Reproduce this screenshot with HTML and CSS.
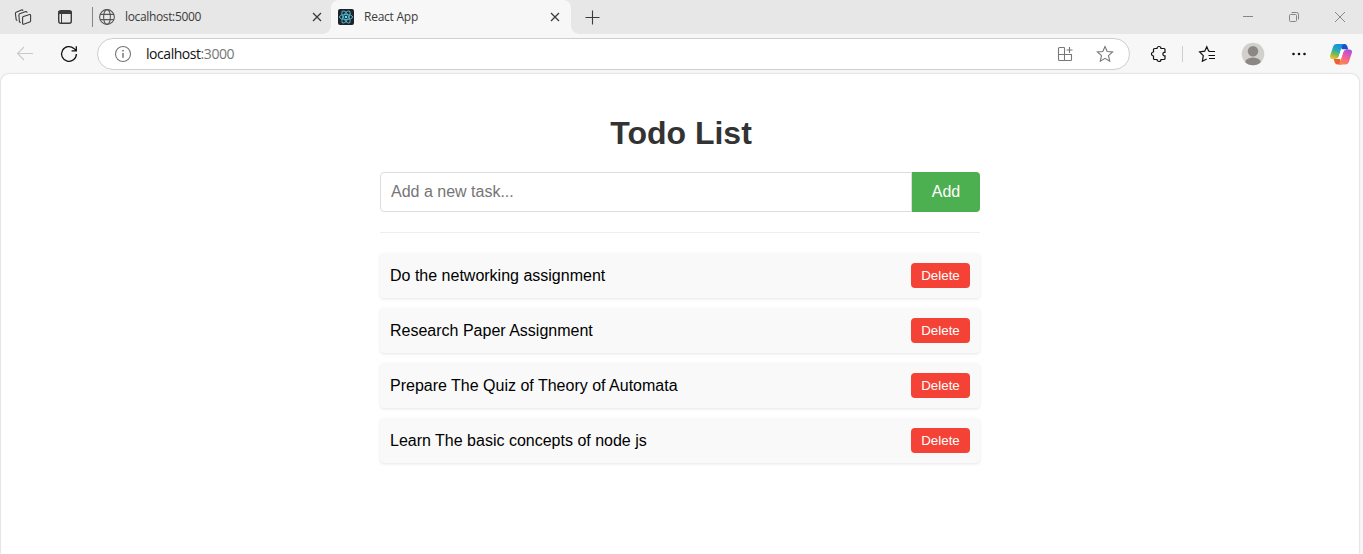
FILE: index.html
```html
<!DOCTYPE html>
<html lang="en">
<head>
<meta charset="utf-8">
<title>React App</title>
<link rel="stylesheet" href="styles.css">
</head>
<body>
<header class="tabstrip">
  <svg class="icon workspaces" width="18" height="18" viewBox="0 0 18 18"><path d="M9.400 8.600 15.600 6.500q1-.2 1 .8v5.600q0 .8-.8 1.100L9.600 16.200q-1 .2-1-.8V9.700q0-.8.800-1.100ZM6.600 14.700 5.400 13.800 4.900 7.200q0-1 .8-1.400L11.800 3.600q1.100-.2 1.400 1.100M3.200 12.600l-1-.9L1.400 5.500q0-1 .7-1.300L7.500 2q1-.3 1.700.6"/></svg>
  <svg class="icon tab-actions" width="16" height="16" viewBox="0 0 16 16"><rect x="1.700" y="1.700" width="12.600" height="12.600" rx="2"/><path d="M1.500 3.500h13" stroke-width="3"/><path d="M4.500 5v9.300" stroke-width="1"/></svg>
  <div class="tab">
    <svg class="icon globe" width="16" height="16" viewBox="0 0 16 16"><circle cx="8" cy="8" r="7.400"/><ellipse cx="8" cy="8" rx="3.400" ry="7.400"/><path d="M1.200 5.400h13.600M1.200 10.600h13.600"/></svg>
    <span class="tab-title">localhost:5000</span>
    <svg class="icon tab-close" width="10" height="10" viewBox="0 0 10 10"><path d="m1 1 8 8M9 1 1 9"/></svg>
  </div>
  <div class="tab tab-active">
    <svg class="favicon" width="16" height="16" viewBox="0 0 16 16"><rect width="16" height="16" rx="2" fill="#20232a"/><g fill="none" stroke="#4fb4cc" stroke-width="1"><ellipse cx="8" cy="8" rx="6.600" ry="2.600"/><ellipse cx="8" cy="8" rx="6.600" ry="2.600" transform="rotate(60 8 8)"/><ellipse cx="8" cy="8" rx="6.600" ry="2.600" transform="rotate(120 8 8)"/></g><circle cx="8" cy="8" r="1.300" fill="#61dafb"/></svg>
    <span class="tab-title">React App</span>
    <svg class="icon tab-close" width="10" height="10" viewBox="0 0 10 10"><path d="m1 1 8 8M9 1 1 9"/></svg>
  </div>
  <svg class="icon new-tab" width="15" height="15" viewBox="0 0 15 15"><path d="M.5 7.500h14M7.500.5v14"/></svg>
  <div class="window-controls">
    <svg class="icon" width="12" height="12" viewBox="0 0 12 12"><path d="M1 5.500h10"/></svg>
    <svg class="icon" width="12" height="12" viewBox="0 0 12 12"><rect x="1.500" y="3.500" width="7" height="7" rx="1"/><path d="M3.500 1.500h5.200a1.800 1.800 0 0 1 1.800 1.800v5.200"/></svg>
    <svg class="icon" width="12" height="12" viewBox="0 0 12 12"><path d="m1 1 10 10M11 1 1 11"/></svg>
  </div>
</header>

<nav class="toolbar">
  <svg class="icon back" width="18" height="16" viewBox="0 0 18 16"><path d="M17 7.500H1.500M8 1 1.500 7.500 8 14"/></svg>
  <svg class="icon reload" width="18" height="18" viewBox="0 0 18 18"><path d="M16.400 9A7.400 7.400 0 1 1 13.900 3.400L16.200 5.600M16.300 1.200v4.600h-4.700"/></svg>
  <div class="address">
    <svg class="icon info" width="18" height="18" viewBox="0 0 18 18"><circle cx="9" cy="9" r="7.500"/><path d="M9 8v4.700" stroke-width="1.500"/><circle cx="9" cy="5.700" r=".9" class="solid"/></svg>
    <span class="url">localhost<span class="port">:3000</span></span>
    <svg class="icon apps" width="16" height="16" viewBox="0 0 16 16"><path d="M7.500 1.500h-5a1 1 0 0 0-1 1v11a1 1 0 0 0 1 1h11a1 1 0 0 0 1-1v-5h-13M7.500 1.500v13M12.500 1v6M9.500 4h6"/></svg>
    <svg class="icon favorite" width="18" height="18" viewBox="0 0 18 18"><path d="m9 1.500 2.200 5 5.400.5-4.100 3.600 1.200 5.500L9 13.300l-4.700 2.800 1.200-5.500L1.400 7l5.400-.5Z"/></svg>
  </div>
  <svg class="icon puzzle" width="18" height="18" viewBox="0 0 18 18"><path d="M5.500 3.500H8a2 2 0 0 1 4 0h3a1 1 0 0 1 1 1V7.300h-.8a1.800 1.800 0 0 0 0 3.500h.8v2.700a1 1 0 0 1-1 1h-3a2 2 0 0 1-4 0H5.500a1 1 0 0 1-1-1V11a2 2 0 0 1 0-4V4.500a1 1 0 0 1 1-1Z"/></svg>
  <span class="divider"></span>
  <svg class="icon collections" width="18" height="18" viewBox="0 0 18 18"><path d="M11.500 6.200 10.600 6 8.800 1.700 6.700 6.200 1.600 7l3.700 3.700-.9 5.500L8.700 14M11 6.500h6M10.500 10.500H17M11 13.500h6"/></svg>
  <svg class="avatar" width="24" height="24" viewBox="0 0 24 24"><defs><clipPath id="face"><circle cx="12" cy="12" r="11.300"/></clipPath></defs><circle cx="12" cy="12" r="11.300" fill="#d2d0cd"/><g fill="#8b8784" clip-path="url(#face)"><circle cx="12" cy="9.300" r="5.200"/><ellipse cx="12" cy="21" rx="8" ry="5.500"/></g></svg>
  <svg class="more" width="16" height="4" viewBox="0 0 16 4"><circle cx="2.500" cy="2" r="1.300"/><circle cx="8" cy="2" r="1.300"/><circle cx="13.500" cy="2" r="1.300"/></svg>
  <svg class="copilot" width="22" height="21" viewBox="0 0 22 21">
    <defs>
      <linearGradient id="cool" x1=".6" y1="0" x2=".3" y2="1"><stop offset="0" stop-color="#1590df"/><stop offset=".4" stop-color="#23a9bd"/><stop offset=".7" stop-color="#79bb55"/><stop offset="1" stop-color="#f3c51b"/></linearGradient>
      <linearGradient id="warm" x1=".8" y1="0" x2=".3" y2="1"><stop offset="0" stop-color="#a64ce8"/><stop offset=".5" stop-color="#f0609a"/><stop offset="1" stop-color="#ff8a48"/></linearGradient>
    </defs>
    <path d="M10 0h4.500q2 0 2.700 2l1.100 3.500H12Z" fill="#174fce"/>
    <path d="M12 20.500H7.500q-2 0-2.700-2L3.700 15H10Z" fill="#ed6037"/>
    <path d="M6.500 0H14q-1.600.5-2.200 2.500L9 12q-.8 3-3.500 3H3Q-.6 15 .2 11.500L3 3Q4 0 6.500 0Z" fill="url(#cool)"/>
    <path d="M15.500 20.500H8q1.600-.5 2.200-2.500L13 8.500q.8-3 3.500-3H19q3.600 0 2.800 3.500L19 17.500q-1 3-3.500 3Z" fill="url(#warm)"/>
    <path d="M11.600 5.500h4.600q-2.500.5-3.200 3l-1.300 4.500q-.6 2-2.600 2H6q2.400-.4 3.100-3l1.200-4.500q.4-1.500 1.300-2Z" fill="#fff"/>
  </svg>
</nav>

<main class="page">
  <div class="todo">
    <h1 class="title">Todo List</h1>
    <form class="task-form">
      <input class="task-input" type="text" placeholder="Add a new task...">
      <button class="add" type="button">Add</button>
    </form>
    <ul class="tasks">
      <li class="task"><span>Do the networking assignment</span><button class="delete">Delete</button></li>
      <li class="task"><span>Research Paper Assignment</span><button class="delete">Delete</button></li>
      <li class="task"><span>Prepare The Quiz of Theory of Automata</span><button class="delete">Delete</button></li>
      <li class="task"><span>Learn The basic concepts of node js</span><button class="delete">Delete</button></li>
    </ul>
  </div>
</main>
</body>
</html>
```
FILE: styles.css
```css
* { box-sizing: border-box; }
html, body { height: 100%; }
body {
  margin: 0;
  display: flex;
  flex-direction: column;
  overflow: hidden;
  background: #f7f7f7;
  font-family: "Liberation Sans", Arial, sans-serif;
}
svg { display: block; flex: none; }
.icon { fill: none; stroke: #3b3b3b; stroke-width: 1.1; }
.icon .solid { fill: currentColor; stroke: none; }

/* Tab strip */
.tabstrip {
  display: flex;
  align-items: center;
  flex: none;
  height: 34px;
  background: #e7e7e7;
}
.workspaces { margin-left: 14px; }
.tab-actions { margin-left: 25px; stroke-width: 1.4; }
.tab {
  display: flex;
  align-items: center;
  width: 239px;
  height: 34px;
  margin-left: 19px;
  padding: 0 9px 0 7px;
  background: linear-gradient(#858585, #858585) 0 50% / 1px 20px no-repeat;
}
.globe { stroke: #555; }
.tab-active {
  position: relative;
  width: 240px;
  margin-left: 0;
  padding: 0 11px 0 7px;
  border-radius: 8px 8px 0 0;
  background: #f7f7f7;
}
.tab-active::before,
.tab-active::after {
  content: "";
  position: absolute;
  bottom: 0;
  width: 8px;
  height: 8px;
}
.tab-active::before { left: -8px; background: radial-gradient(circle at 0 0, transparent 7.5px, #f7f7f7 8px); }
.tab-active::after { right: -8px; background: radial-gradient(circle at 100% 0, transparent 7.5px, #f7f7f7 8px); }
.tab-title {
  flex: 1;
  margin-left: 10px;
  font: 12px/16px "Open Sans", sans-serif;
  letter-spacing: -0.35px;
  color: #3b3b3b;
}
.tab-active .tab-title { letter-spacing: -0.25px; }
.tab-close { stroke-width: 1.3; }
.new-tab { margin-left: 14px; }
.window-controls { display: flex; gap: 34px; margin-left: auto; margin-right: 17px; }
.window-controls .icon { stroke: #868686; stroke-width: 1; }

/* Toolbar */
.toolbar {
  display: flex;
  align-items: center;
  flex: none;
  height: 40px;
}
.back { margin-left: 16px; stroke: #c9c9c9; }
.reload { margin-left: 26px; stroke: #111; stroke-width: 1.3; }
.address {
  display: flex;
  align-items: center;
  width: 1033px;
  height: 32px;
  margin-left: 19px;
  padding: 0 15px 0 16px;
  border: 1px solid #cecece;
  border-radius: 16px;
  background: #fff;
}
.info { stroke: #777; color: #777; }
.url {
  flex: 1;
  margin-left: 14px;
  font: 14px/18px "Open Sans", sans-serif;
  letter-spacing: -0.45px;
  color: #111;
}
.port { color: #767676; }
.apps { stroke: #777; }
.favorite { margin-left: 23px; stroke: #777; }
.puzzle { margin-left: 19px; stroke: #111; stroke-width: 1.2; }
.divider { width: 1px; height: 16px; margin-left: 15px; background: #cecece; }
.collections { margin-left: 15px; stroke: #111; stroke-width: 1.2; }
.avatar { margin-left: 25px; }
.more { margin-left: 26px; fill: #111; }
.copilot { margin-left: 23px; }

/* Page */
.page {
  flex: 1;
  margin: 0 4px 0 1px;
  padding-top: 41px;
  border-radius: 8px 8px 0 0;
  background: #fff;
  box-shadow: 0 0 2px rgba(0, 0, 0, 0.25);
}
.todo { width: 600px; margin: 0 auto; }
.title {
  margin: 0 0 20px;
  padding-left: 2px;
  font-size: 32px;
  line-height: 37px;
  text-align: center;
  color: #333;
}
.task-form {
  display: flex;
  height: 61px;
  padding-bottom: 20px;
  border-bottom: 1px solid #eee;
}
.task-input {
  flex: 1;
  min-width: 0;
  padding: 0 10px;
  border: 1px solid #ddd;
  border-radius: 4px 0 0 4px;
  font: 16px "Liberation Sans", Arial, sans-serif;
}
.task-input::placeholder { color: #757575; }
.add {
  width: 68px;
  padding: 0;
  border: 0;
  border-radius: 0 4px 4px 0;
  background: #4caf50;
  color: #fff;
  font: 16px "Liberation Sans", Arial, sans-serif;
}
.tasks {
  display: grid;
  gap: 10px;
  margin: 20px 0 0;
  padding: 0;
  list-style: none;
}
.task {
  display: flex;
  align-items: center;
  justify-content: space-between;
  height: 45px;
  padding: 0 10px;
  border-radius: 4px;
  background: #f9f9f9;
  box-shadow: 0 1px 3px rgba(0, 0, 0, 0.1);
  font-size: 16px;
  color: #000;
}
.delete {
  width: 59px;
  height: 25px;
  padding: 0;
  border: 0;
  border-radius: 4px;
  background: #f44336;
  color: #fff;
  font: 13.333px "Liberation Sans", Arial, sans-serif;
}
```
